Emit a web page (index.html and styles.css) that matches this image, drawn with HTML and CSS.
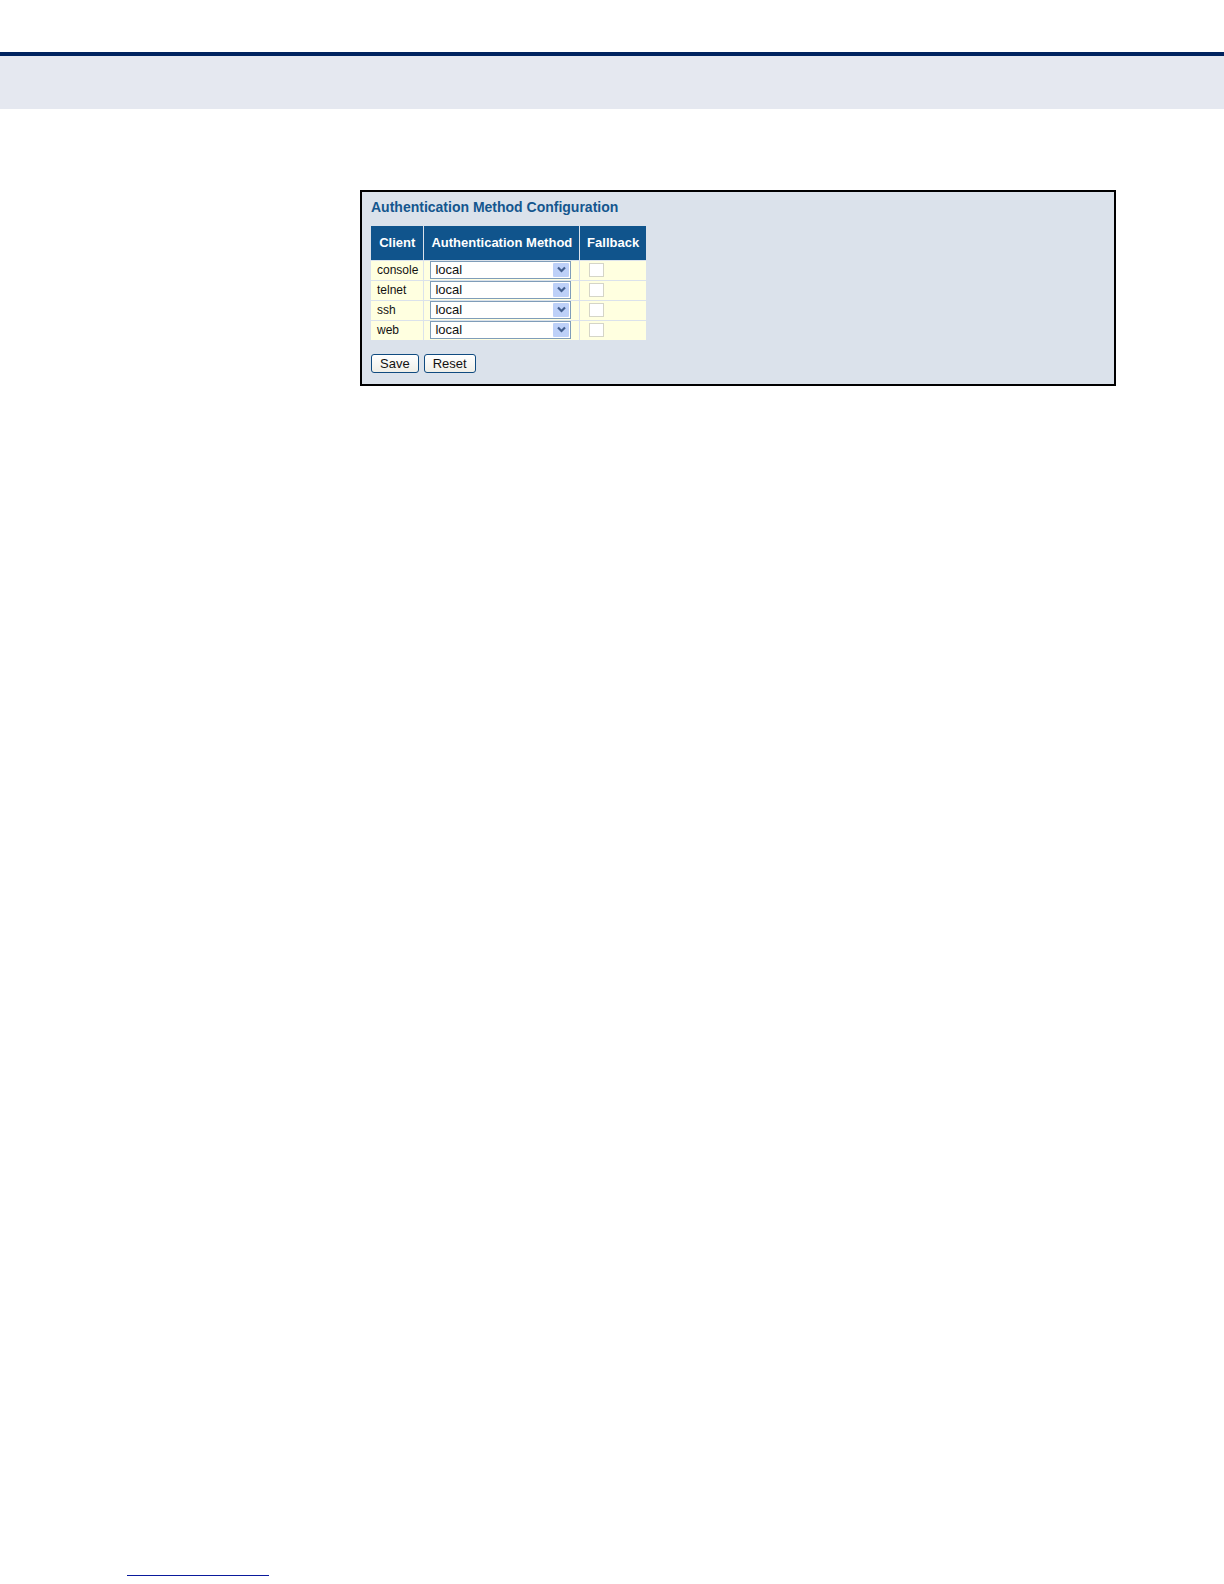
FILE: index.html
```
<!DOCTYPE html>
<html lang="en">
<head>
    <meta charset="UTF-8">
    <meta name="viewport" content="width=device-width, initial-scale=1.0">
    <title>Authentication Method Configuration</title>
    <link rel="stylesheet" href="styles.css">
</head>
<body>
    <header class="page-header"></header>

    <main class="content">
        <form class="panel">
            <h1>Authentication Method Configuration</h1>
            <table class="auth-table">
                <thead>
                    <tr>
                        <th class="col-client" scope="col">Client</th>
                        <th class="col-method" scope="col">Authentication Method</th>
                        <th class="col-fallback" scope="col">Fallback</th>
                    </tr>
                </thead>
                <tbody>
                    <tr>
                        <td><label for="consoleMethod">console</label></td>
                        <td>
                            <select id="consoleMethod" name="consoleMethod">
                                <option>local</option>
                            </select>
                        </td>
                        <td><input type="checkbox" name="consoleFallback" aria-label="console fallback"></td>
                    </tr>
                    <tr>
                        <td><label for="telnetMethod">telnet</label></td>
                        <td>
                            <select id="telnetMethod" name="telnetMethod">
                                <option>local</option>
                            </select>
                        </td>
                        <td><input type="checkbox" name="telnetFallback" aria-label="telnet fallback"></td>
                    </tr>
                    <tr>
                        <td><label for="sshMethod">ssh</label></td>
                        <td>
                            <select id="sshMethod" name="sshMethod">
                                <option>local</option>
                            </select>
                        </td>
                        <td><input type="checkbox" name="sshFallback" aria-label="ssh fallback"></td>
                    </tr>
                    <tr>
                        <td><label for="webMethod">web</label></td>
                        <td>
                            <select id="webMethod" name="webMethod">
                                <option>local</option>
                            </select>
                        </td>
                        <td><input type="checkbox" name="webFallback" aria-label="web fallback"></td>
                    </tr>
                </tbody>
            </table>
            <div class="buttons">
                <button type="submit">Save</button>
                <button type="reset">Reset</button>
            </div>
        </form>
    </main>

    <footer class="page-footer">
        <hr class="footer-line">
    </footer>
</body>
</html>
```
FILE: styles.css
```
* {
    box-sizing: border-box;
}

body {
    margin: 0;
    min-height: 100vh;
    display: flex;
    flex-direction: column;
    background-color: #fff;
    font-family: "Liberation Sans", Arial, sans-serif;
    font-size: 12px;
    color: #111;
}

.page-header {
    height: 57px;
    margin-top: 52px;
    background-color: #e5e8f0;
    border-top: 4px solid #00235f;
}

.content {
    flex: 1;
    padding: 81px 108px 40px 360px;
}

.panel {
    padding: 7px 9px 11px;
    background-color: #dbe2eb;
    border: 2px solid #000;
}

.panel h1 {
    margin: 0 0 11px;
    font-size: 14px;
    line-height: 16px;
    color: #14568e;
}

.auth-table {
    border-collapse: collapse;
}

.auth-table th {
    height: 34px;
    padding: 0;
    background-color: #10548c;
    border-right: 1px solid #dbe2eb;
    font-size: 13px;
    color: #fff;
}

.auth-table td {
    height: 20px;
    padding: 0 5px 0 6px;
    background-color: #ffffe0;
    border: 1px solid #dbe2eb;
    border-left: none;
}

.auth-table th:last-child,
.auth-table td:last-child {
    border-right: none;
}

.auth-table td:last-child {
    padding-left: 9px;
}

.col-client {
    width: 52px;
}

.col-method {
    width: 156px;
}

.col-fallback {
    width: 66px;
}

.auth-table label,
.auth-table select,
.auth-table input {
    display: block;
}

.auth-table select {
    appearance: none;
    width: 141px;
    height: 18px;
    padding: 0 20px 0 4px;
    border: 1px solid #7f9db9;
    border-radius: 0;
    background: #fff url("data:image/svg+xml,%3Csvg xmlns='http://www.w3.org/2000/svg' width='17' height='14'%3E%3Crect width='16' height='14' rx='1' fill='%23bdd0f8'/%3E%3Cpath d='M5 4.5l3.5 3.5L12 4.5' fill='none' stroke='%23435f8f' stroke-width='2.2'/%3E%3C/svg%3E") no-repeat right 0 top 1px;
    font: inherit;
    font-size: 13px;
    line-height: 16px;
    color: #111;
}

.auth-table input {
    appearance: none;
    width: 15px;
    height: 14px;
    margin: 0;
    background-color: #fff;
    border: 1px solid #d5d5c8;
}

.auth-table input:checked {
    background-color: #435f8f;
}

.buttons {
    display: flex;
    gap: 5px;
    margin-top: 13px;
}

.buttons button {
    height: 19px;
    padding: 0 8px;
    background: linear-gradient(#fff, #f0efe8);
    border: 1px solid #104b80;
    border-radius: 3px;
    font: inherit;
    font-size: 13px;
    color: #111;
}

.page-footer {
    padding: 0 127px 8px;
}

.footer-line {
    width: 142px;
    margin: 0;
    border: none;
    border-top: 1px solid #0a1a9c;
}
```
